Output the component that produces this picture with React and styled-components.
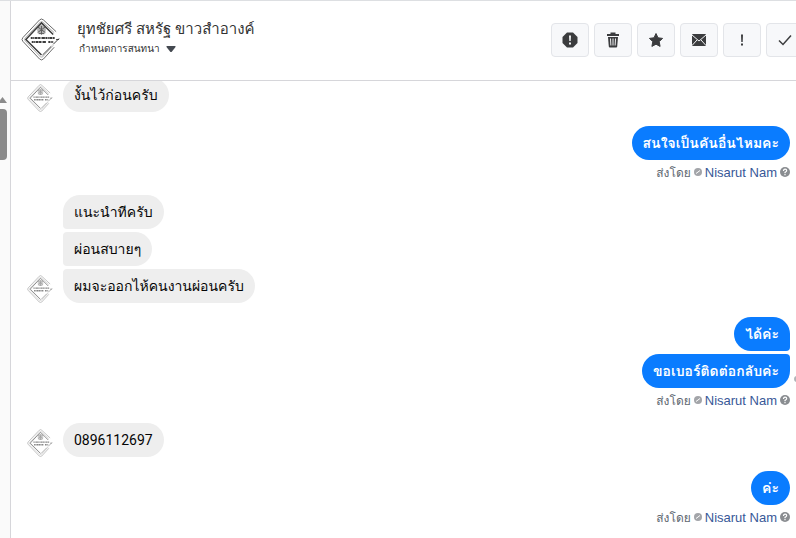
import React from "react";
import styled, { createGlobalStyle } from "styled-components";

const conversation = [
  { from: "customer", texts: ["งั้นไว้ก่อนครับ"] },
  { from: "page", texts: ["สนใจเป็นคันอื่นไหมคะ"] },
  {
    from: "customer",
    texts: ["แนะนำทีครับ", "ผ่อนสบายๆ", "ผมจะออกไห้คนงานผ่อนครับ"],
  },
  { from: "page", texts: ["ได้ค่ะ", "ขอเบอร์ติดต่อกลับค่ะ"], sent: true },
  { from: "customer", texts: ["0896112697"] },
  { from: "page", texts: ["ค่ะ"] },
];

const AvatarLogo = () => (
  <svg viewBox="0 0 42 44" aria-hidden="true">
    <g fill="none" stroke="#3c3c3c">
      <path d="M36 14 23 2Q21 0 19 2L2 20Q0 22 2 24L19 42Q21 44 23 42L34 30" stroke="#666" strokeWidth="1" />
      <path d="M34 15 22 4 20 4 4 21 4 23 20 40 22 40 33 28" stroke="#aaa" strokeWidth="1" />
      <path d="M33 17 21 5 5 22 21 38" strokeWidth="1.500" />
      <path d="M22 38 31 29M33 27 39 21M36 22h3" strokeWidth="1" />
      <path d="M10 20.500h25" strokeWidth="2" strokeDasharray="2 .5 1 .5 3 .5" />
      <path d="M11 24.500h15M28 24.500h5" strokeWidth="2" strokeDasharray="2 .5 1 .5 3 .5" />
      <path d="M21 8v9M17 9l8 6M25 9l-8 6M18 16h6" stroke="#555" />
    </g>
    <circle cx="21" cy="12" r="4.500" fill="#666" opacity="0.5" />
  </svg>
);

const tools = [
  {
    label: "สแปม",
    icon: (
      <>
        <path d="M5 .5h6L15.500 5v6L11 15.500H5L.5 11V5z" />
        <path d="M7 3.500h2L8.700 9H7.300zM7 10.500h2v2H7z" fill="#f5f6f7" />
      </>
    ),
  },
  {
    label: "ลบ",
    icon: (
      <>
        <path d="M5.500 2V.5h5V2h3.500v2H2V2z" />
        <path d="M3 5h10l-.8 9.500q-.1 1-1 1H4.800q-.9 0-1-1z" />
        <path d="M5.500 6.500l.4 7M8 6.500v7M10.500 6.500l-.4 7" stroke="#f5f6f7" strokeWidth="1" />
      </>
    ),
  },
  {
    label: "ติดดาว",
    icon: (
      <path
        d="M8 1.500l2 4.300 4.600.6-3.400 3.200.9 4.800L8 12.200l-4.100 2.200.9-4.800L1.400 6.400 6 5.800z"
        stroke="#3b3c3e"
        strokeLinejoin="round"
      />
    ),
  },
  {
    label: "ยังไม่ได้อ่าน",
    icon: (
      <>
        <rect x="1" y="2" width="14" height="12" rx="1" />
        <path d="M1 3l7 6 7-6M1 13.500l5-5.500M15 13.500l-5-5.500" fill="none" stroke="#f5f6f7" />
      </>
    ),
  },
  {
    label: "ติดตาม",
    icon: <path d="M7 2.500h2L8.700 10H7.300zM7 11.500h2v2H7z" />,
  },
  {
    label: "เสร็จสิ้น",
    icon: <path d="M2 8.500l4 4 8-9" fill="none" stroke="#3b3c3e" strokeWidth="1.500" />,
  },
];

const Sender = () => (
  <Meta>
    ส่งโดย
    <svg width="8" height="8" viewBox="0 0 8 8" aria-hidden="true">
      <circle cx="4" cy="4" r="4" fill="#a3a5a9" />
      <path d="M2 5.500l4-3" stroke="#fff" />
    </svg>
    <SenderLink href="#sender">Nisarut Nam</SenderLink>
    <Help type="button" aria-label="ช่วยเหลือ">
      <svg width="10" height="10" viewBox="0 0 10 10">
        <circle cx="5" cy="5" r="5" fill="#8a8d91" />
        <path d="M3.500 4q0-1.800 1.600-1.800T6.700 3.800Q6.700 4.500 5 5.400v.9M5 7v1.200" fill="none" stroke="#fff" strokeWidth="1.200" />
      </svg>
    </Help>
  </Meta>
);

const App = () => {
  return (
    <>
      <GlobalStyle />
      <Page>
        <Rail>
          <svg width="7" height="6" viewBox="0 0 7 6" aria-hidden="true">
            <path d="M-2 6 2.500 0 7 6z" fill="#8b8b8b" />
          </svg>
          <Thumb />
        </Rail>
        <Chat>
          <Header>
            <HeaderAvatar>
              <AvatarLogo />
            </HeaderAvatar>
            <Person>
              <Name>ยุทชัยศรี สหรัฐ ขาวสำอางค์</Name>
              <Schedule type="button">
                กำหนดการสนทนา
                <svg width="10" height="6" viewBox="0 0 10 6" aria-hidden="true">
                  <path d="M1 0h8q1 0 .5 1L6 5.500q-1 1-2 0L.5 1Q0 0 1 0z" fill="#444950" />
                </svg>
              </Schedule>
            </Person>
            <Toolbar>
              {tools.map((tool) => (
                <ToolButton key={tool.label} type="button" aria-label={tool.label}>
                  <svg width="16" height="16" viewBox="0 0 16 16" fill="#3b3c3e">
                    {tool.icon}
                  </svg>
                </ToolButton>
              ))}
            </Toolbar>
          </Header>
          <Messages>
            {conversation.map((group, i) => {
              const own = group.from === "page";
              return (
                <Group key={i} $own={own}>
                  {!own && (
                    <Avatar>
                      <AvatarLogo />
                    </Avatar>
                  )}
                  <Stack $own={own}>
                    {group.texts.map((text) => (
                      <Bubble key={text} $own={own}>
                        {text}
                      </Bubble>
                    ))}
                    {group.sent && <SentMark />}
                  </Stack>
                  {own && <Sender />}
                </Group>
              );
            })}
          </Messages>
        </Chat>
      </Page>
    </>
  );
};

export default App;

const GlobalStyle = createGlobalStyle`
  * {
    box-sizing: border-box;
  }
  body {
    margin: 0;
    background: #fff;
    font-family: Roboto, Tahoma, Loma, Waree, "Noto Sans Thai Looped", Garuda, "Noto Sans", sans-serif;
  }
  svg {
    display: block;
    flex-shrink: 0;
  }
`;
const Page = styled.div`
  display: flex;
  height: 100vh;
  border-top: 1px solid #dddfe2;
  overflow: hidden;
`;
const Rail = styled.div`
  display: flex;
  flex-direction: column;
  gap: 6px;
  width: 11px;
  flex-shrink: 0;
  padding-top: 96px;
  background: #fafafa;
  border-right: 1px solid #d6d6da;
`;
const Thumb = styled.div`
  width: 7px;
  height: 51px;
  background: #8b8b8b;
  border-radius: 0 4px 4px 0;
`;
const Chat = styled.main`
  display: flex;
  flex-direction: column;
  flex: 1;
  min-width: 0;
`;
const Header = styled.header`
  display: flex;
  align-items: center;
  height: 80px;
  flex-shrink: 0;
  padding: 0 0 2px 10px;
  border-bottom: 1px solid #d6d6da;
  overflow: hidden;
`;
const HeaderAvatar = styled.div`
  width: 41px;
  flex-shrink: 0;
`;
const Person = styled.div`
  padding: 0 0 6px 15px;
`;
const Name = styled.h1`
  margin: 0;
  font-size: 15px;
  font-weight: 400;
  line-height: 24px;
  white-space: nowrap;
  color: #333;
`;
const Schedule = styled.button`
  display: flex;
  align-items: center;
  gap: 6px;
  padding: 0 0 0 2px;
  border: 0;
  background: none;
  color: #333;
  font-family: inherit;
  font-size: 10px;
  line-height: 16px;
  white-space: nowrap;
  cursor: pointer;
`;
const Toolbar = styled.div`
  display: flex;
  gap: 5px;
  margin: 0 -8px 0 auto;
`;
const ToolButton = styled.button`
  display: flex;
  align-items: center;
  justify-content: center;
  width: 38px;
  height: 34px;
  padding: 0;
  background: #f7f8fa;
  border: 1px solid #e3e5e9;
  border-radius: 4px;
  cursor: pointer;
`;
const Messages = styled.section`
  display: flex;
  flex-direction: column;
  justify-content: flex-end;
  flex: 1;
  min-height: 0;
  padding: 0 6px 9px 16px;
  overflow: hidden;
`;
const Group = styled.div`
  display: flex;
  flex-direction: ${({ $own }) => ($own ? "column" : "row")};
  align-items: flex-end;
  flex-shrink: 0;
  gap: ${({ $own }) => ($own ? "0" : "9px")};
  margin-bottom: ${({ $own }) => ($own ? "11px" : "14px")};
  &:last-child {
    margin-bottom: 0;
  }
`;
const Avatar = styled.div`
  width: 27px;
  opacity: 0.6;
`;
const Stack = styled.div`
  position: relative;
  display: flex;
  flex-direction: column;
  align-items: ${({ $own }) => ($own ? "flex-end" : "flex-start")};
  gap: 3px;
`;
const Bubble = styled.div`
  height: 34px;
  padding: 0 11px;
  border-radius: 17px;
  background: ${({ $own }) => ($own ? "#0a7cff" : "#eeeeee")};
  color: ${({ $own }) => ($own ? "#fff" : "#050505")};
  font-size: 14px;
  font-weight: ${({ $own }) => ($own ? 600 : 400)};
  line-height: 34px;
  white-space: nowrap;
  &:not(:last-of-type) {
    border-bottom-${({ $own }) => ($own ? "right" : "left")}-radius: 4px;
  }
  &:not(:first-of-type) {
    border-top-${({ $own }) => ($own ? "right" : "left")}-radius: 4px;
  }
`;
const SentMark = styled.span`
  position: absolute;
  right: -10px;
  bottom: 6px;
  width: 6px;
  height: 6px;
  border-radius: 50%;
  background: #b0b3b8;
`;
const Meta = styled.div`
  display: flex;
  align-items: center;
  gap: 3px;
  height: 24px;
  color: #606770;
  font-size: 12px;
  white-space: nowrap;
`;
const SenderLink = styled.a`
  color: #385898;
  font-family: "Liberation Sans", Arial, sans-serif;
  font-size: 13px;
  text-decoration: none;
`;
const Help = styled.button`
  padding: 0;
  border: 0;
  background: none;
  cursor: pointer;
`;
